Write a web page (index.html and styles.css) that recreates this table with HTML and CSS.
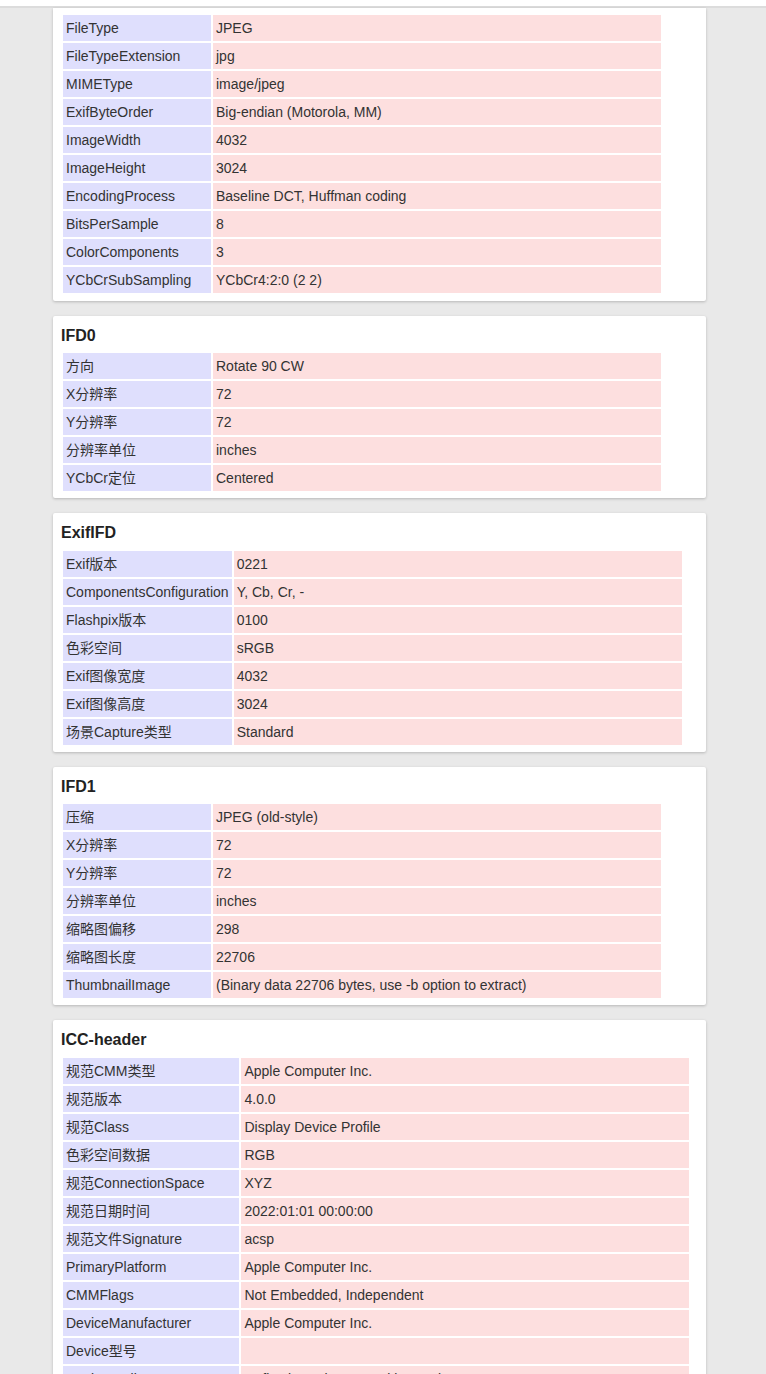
FILE: index.html
```html
<!DOCTYPE html>
<html lang="zh-CN">
<head>
<meta charset="utf-8">
<title>EXIF 信息</title>
<link rel="stylesheet" href="styles.css">
</head>
<body>
<header class="topbar"></header>
<main class="page">
  <section class="card card--continued">
    <table class="meta">
      <tr><td class="k">FileType</td><td class="v">JPEG</td></tr>
      <tr><td class="k">FileTypeExtension</td><td class="v">jpg</td></tr>
      <tr><td class="k">MIMEType</td><td class="v">image/jpeg</td></tr>
      <tr><td class="k">ExifByteOrder</td><td class="v">Big-endian (Motorola, MM)</td></tr>
      <tr><td class="k">ImageWidth</td><td class="v">4032</td></tr>
      <tr><td class="k">ImageHeight</td><td class="v">3024</td></tr>
      <tr><td class="k">EncodingProcess</td><td class="v">Baseline DCT, Huffman coding</td></tr>
      <tr><td class="k">BitsPerSample</td><td class="v">8</td></tr>
      <tr><td class="k">ColorComponents</td><td class="v">3</td></tr>
      <tr><td class="k">YCbCrSubSampling</td><td class="v">YCbCr4:2:0 (2 2)</td></tr>
    </table>
  </section>

  <section class="card">
    <h3 class="card__title">IFD0</h3>
    <table class="meta">
      <tr><td class="k">方向</td><td class="v">Rotate 90 CW</td></tr>
      <tr><td class="k">X分辨率</td><td class="v">72</td></tr>
      <tr><td class="k">Y分辨率</td><td class="v">72</td></tr>
      <tr><td class="k">分辨率单位</td><td class="v">inches</td></tr>
      <tr><td class="k">YCbCr定位</td><td class="v">Centered</td></tr>
    </table>
  </section>

  <section class="card">
    <h3 class="card__title">ExifIFD</h3>
    <table class="meta">
      <tr><td class="k">Exif版本</td><td class="v">0221</td></tr>
      <tr><td class="k">ComponentsConfiguration</td><td class="v">Y, Cb, Cr, -</td></tr>
      <tr><td class="k">Flashpix版本</td><td class="v">0100</td></tr>
      <tr><td class="k">色彩空间</td><td class="v">sRGB</td></tr>
      <tr><td class="k">Exif图像宽度</td><td class="v">4032</td></tr>
      <tr><td class="k">Exif图像高度</td><td class="v">3024</td></tr>
      <tr><td class="k">场景Capture类型</td><td class="v">Standard</td></tr>
    </table>
  </section>

  <section class="card">
    <h3 class="card__title">IFD1</h3>
    <table class="meta">
      <tr><td class="k">压缩</td><td class="v">JPEG (old-style)</td></tr>
      <tr><td class="k">X分辨率</td><td class="v">72</td></tr>
      <tr><td class="k">Y分辨率</td><td class="v">72</td></tr>
      <tr><td class="k">分辨率单位</td><td class="v">inches</td></tr>
      <tr><td class="k">缩略图偏移</td><td class="v">298</td></tr>
      <tr><td class="k">缩略图长度</td><td class="v">22706</td></tr>
      <tr><td class="k">ThumbnailImage</td><td class="v">(Binary data 22706 bytes, use -b option to extract)</td></tr>
    </table>
  </section>

  <section class="card">
    <h3 class="card__title">ICC-header</h3>
    <table class="meta">
      <tr><td class="k">规范CMM类型</td><td class="v">Apple Computer Inc.</td></tr>
      <tr><td class="k">规范版本</td><td class="v">4.0.0</td></tr>
      <tr><td class="k">规范Class</td><td class="v">Display Device Profile</td></tr>
      <tr><td class="k">色彩空间数据</td><td class="v">RGB</td></tr>
      <tr><td class="k">规范ConnectionSpace</td><td class="v">XYZ</td></tr>
      <tr><td class="k">规范日期时间</td><td class="v">2022:01:01 00:00:00</td></tr>
      <tr><td class="k">规范文件Signature</td><td class="v">acsp</td></tr>
      <tr><td class="k">PrimaryPlatform</td><td class="v">Apple Computer Inc.</td></tr>
      <tr><td class="k">CMMFlags</td><td class="v">Not Embedded, Independent</td></tr>
      <tr><td class="k">DeviceManufacturer</td><td class="v">Apple Computer Inc.</td></tr>
      <tr><td class="k">Device型号</td><td class="v"></td></tr>
      <tr><td class="k">DeviceAttributes</td><td class="v">Reflective, Glossy, Positive, Color</td></tr>
      <tr><td class="k">RenderingIntent</td><td class="v">Perceptual</td></tr>
      <tr><td class="k">ConnectionSpaceIlluminant</td><td class="v">0.9642 1 0.82491</td></tr>
      <tr><td class="k">规范Creator</td><td class="v">Apple Computer Inc.</td></tr>
      <tr><td class="k">规范ID</td><td class="v">ecfda38e388547c36db4bd4f7ada182f</td></tr>
    </table>
  </section>
</main>
</body>
</html>
```

FILE: styles.css
```css
html, body {
  margin: 0;
  padding: 0;
}

body {
  background: #e9e9e9;
  color: #333;
  font-family: "Liberation Sans", Arial, "Noto Sans CJK SC", sans-serif;
  font-size: 14px;
}

.topbar {
  height: 6px;
  background: #fff;
  border-bottom: 2px solid #dcdcdc;
}

.page {
  display: flex;
  flex-direction: column;
  gap: 15px;
  padding: 0 0 40px 53px;
}

.card {
  width: 653px;
  box-sizing: border-box;
  background: #fff;
  border-radius: 2px;
  box-shadow: 0 1px 3px rgba(0, 0, 0, 0.22);
  padding: 8px 8px 5px 8px;
}

.card--continued {
  padding-top: 5px;
  padding-bottom: 5.5px;
  border-top-left-radius: 0;
  border-top-right-radius: 0;
}

.card__title {
  margin: 0 0 4px 0;
  font-size: 16px;
  line-height: 23.5px;
  font-weight: bold;
  color: #222;
}

.meta {
  border-collapse: separate;
  border-spacing: 2px;
}

.meta td {
  padding: 4px 3px;
  line-height: 18px;
  height: 18px;
  white-space: nowrap;
  vertical-align: middle;
}

.meta .k {
  width: 142px;
  background: #dfdffd;
}

.meta .v {
  width: 442px;
  background: #fddfdf;
}
```
